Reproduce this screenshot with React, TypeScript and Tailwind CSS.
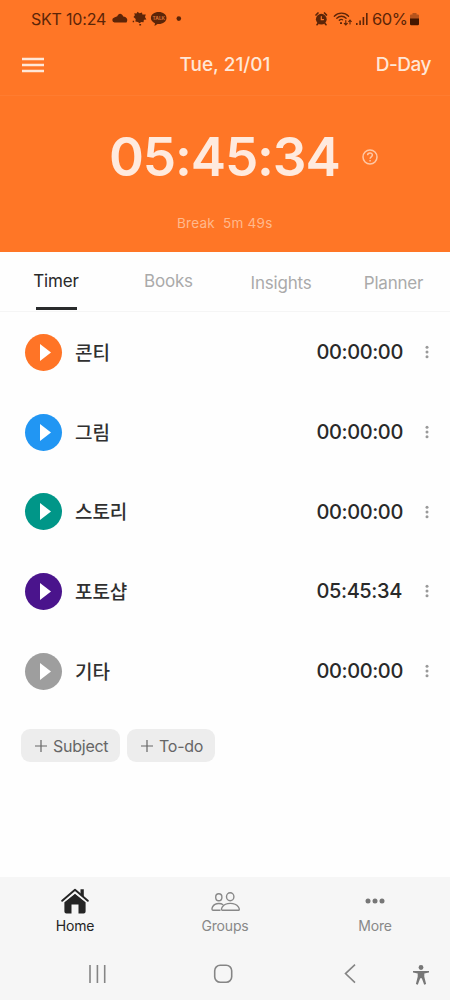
import type { ReactNode } from "react";

type Subject = {
  name: string;
  time: string;
  color: string;
};

const subjects: Subject[] = [
  { name: "콘티", time: "00:00:00", color: "bg-[#ff7426]" },
  { name: "그림", time: "00:00:00", color: "bg-[#2196f3]" },
  { name: "스토리", time: "00:00:00", color: "bg-[#009688]" },
  { name: "포토샵", time: "05:45:34", color: "bg-[#4a148c]" },
  { name: "기타", time: "00:00:00", color: "bg-[#9e9e9e]" },
];

function StatusBar() {
  return (
    <div className="flex h-[38px] items-center pl-[31px] pr-[31px] text-[#5c2508]">
      <span className="w-[75px] whitespace-nowrap text-[16px] leading-5 tracking-[-0.2px]">SKT 10:24</span>
      <svg className="ml-[6px] h-5 w-[70px]" viewBox="112 9 70 20" fill="currentColor">
        <path d="M114.5 22.5a2.6 2.6 0 0 1-.2-5.1l3-1.2c1-3.2 4.6-3.5 5.9.4 4 .4 5 3.5 3.3 5.9z" />
        <path d="m137.5 11.8 2 1.4 2.5-.7.4 2 3.4-.1-.8 2.6 1.4 2.6-2.5.2-.4 2.5-2.5-.2-1.2 1.2-2-1.4-2.4-.3.3-2.5-2.2-2.2 1.4-1.7-.7-2 2.3.4zm-4.8 9h1.4v1.4h-1.4zm6.6 3.3h1.8v1.5h-1.8z" />
        <path d="M158.7 12.1c4.4 0 7.8 2.6 7.8 5.9 0 3.4-3.4 6-7.8 6l-1.2-.1-3 2 .5-2.7c-2.5-1-4.1-2.9-4.1-5.2 0-3.3 3.4-5.9 7.8-5.9z" />
        <text x="158.8" y="20" textAnchor="middle" fontSize="4.8" fontWeight="700" fill="#dc7335">TALK</text>
        <circle cx="178.8" cy="18.6" r="2.3" />
      </svg>
      <svg className="ml-auto h-5 w-[57px]" viewBox="312 9 57 20">
        <circle cx="320.3" cy="19.2" r="5.4" fill="currentColor" />
        <g fill="none" stroke="currentColor" strokeLinecap="round">
          <path d="m315 15 2-2m8.5 2-2-2m-6.5 10.5-1 1.2m8-1.2 1 1.2" strokeWidth="1.7" />
          <path d="M320.3 16.6v3h2.2" stroke="#ff7626" strokeWidth="1.2" />
          <path d="M333.3 16.2c4-4.1 10.4-4.1 14.3 0m-11.8 2c2.7-2.6 6.6-2.6 9.3 0m-6.8 2.1c1.2-1.1 2.3-1.1 3.3-.5" strokeWidth="1.3" />
          <path d="M344.8 20.5v4.2m-1.5-1.4 1.5 1.6 1.5-1.6M349 24v-3.8m-1.3 1.3 1.3-1.4 1.3 1.4" strokeWidth="1.1" />
        </g>
        <path d="M339 22.2h2v1.8h-2zM355 23h1.6v2H355zM358.3 20.5h1.6V25h-1.6zM361.6 17h1.6v8h-1.6zM365 13h1.6v12H365z" fill="currentColor" />
      </svg>
      <span className="ml-[2px] w-[38px] whitespace-nowrap text-[16.5px] leading-5 tracking-[-0.4px]">60%</span>
      <svg className="h-[14px] w-[9px]" viewBox="0 0 9 14">
        <path d="M2.5 1h4v1.5H8A1 1 0 0 1 9 3.5V7H0V3.5a1 1 0 0 1 1-1h1.5z" fill="#b6531c" />
        <path d="M0 6.5h9V12a1.2 1.2 0 0 1-1.2 1.2H1.2A1.2 1.2 0 0 1 0 12z" fill="#451700" />
      </svg>
    </div>
  );
}

function Header() {
  return (
    <header className="h-[252px] shrink-0 bg-[#ff7626]">
      <StatusBar />
      <div className="grid h-[58px] grid-cols-3 items-center border-b border-[#ff7c30] pb-1 pl-[22px] pr-[19px] text-[19px] font-medium text-[#ffe7d7]">
        <svg className="h-4 w-[22px]" viewBox="0 0 22 16" stroke="currentColor" strokeWidth="2.5">
          <path d="M0 2h22M0 8h22M0 14h22" />
        </svg>
        <span className="-ml-[3px] pt-[2px] text-center whitespace-nowrap">Tue, 21/01</span>
        <span className="pt-[2px] text-right tracking-[-0.5px]">D-Day</span>
      </div>
      <div className="flex h-[122px] items-center pl-[109px]">
        <span className="w-[232px] whitespace-nowrap pt-px text-[53px] leading-none font-semibold tracking-[-1.15px] text-[#ffeade]">05:45:34</span>
        <svg className="ml-[21px] h-4 w-4" viewBox="0 0 16 16" fill="none" stroke="#ffc7a4" strokeWidth="1.5">
          <circle cx="8" cy="8" r="7" />
          <path d="M5.6 6.3c0-3.2 4.8-3 4.8-.2 0 1.8-2.3 1.8-2.3 3.6M8.1 11v1.5" />
        </svg>
      </div>
      <p className="-mt-[5px] pl-[177px] text-[13.5px] leading-5 tracking-[0.25px] whitespace-pre text-[#ffb98d]">Break  5m 49s</p>
    </header>
  );
}

function Tabs() {
  return (
    <nav className="flex h-[60px] shrink-0 border-b border-[#f5f5f5] text-[17px] leading-6 tracking-[-0.2px] text-[#aaa]">
      <div className="flex w-[112px] flex-col items-center justify-between pt-[17px] text-[#292929]">
        <span>Timer</span>
        <span className="mb-px h-[3px] w-[41px] bg-[#292b2c]" />
      </div>
      <span className="w-[113px] pt-[17px] text-center">Books</span>
      <span className="w-[112px] pt-[19px] text-center">Insights</span>
      <span className="w-[113px] pt-[19px] text-center">Planner</span>
    </nav>
  );
}

function SubjectRow({ name, time, color }: Subject) {
  return (
    <div className="flex h-[79.7px] items-center pl-[25px] pr-[21.5px]">
      <span className={`flex size-[37px] items-center justify-center rounded-full ${color}`}>
        <svg className="ml-[3px] h-[17px] w-[11px]" viewBox="0 0 11 17" fill="white">
          <path d="M0 0v17l11-8.5z" />
        </svg>
      </span>
      <span className="ml-[13px] font-['Noto_Sans_CJK_KR',sans-serif] text-[19px] font-medium tracking-[-0.1px] text-[#303030]">{name}</span>
      <span className="ml-auto w-[86px] whitespace-nowrap text-[20px] font-medium tracking-[-0.4px] text-[#292929]">{time}</span>
      <svg className="ml-[22px] h-[14px] w-[4px]" viewBox="0 0 4 14" fill="#999">
        <circle cx="2" cy="2.3" r="1.5" />
        <circle cx="2" cy="7" r="1.5" />
        <circle cx="2" cy="11.7" r="1.5" />
      </svg>
    </div>
  );
}

function AddButton({ label, width }: { label: string; width: string }) {
  return (
    <button className={`flex h-[33px] items-center rounded-[9px] bg-[#ededed] pl-[14px] text-[16px] tracking-[-0.25px] text-[#666] ${width}`}>
      <svg className="mr-[6px] h-3 w-3 shrink-0" viewBox="0 0 12 12" stroke="currentColor" strokeWidth="1.2">
        <path d="M6 0v12M0 6h12" />
      </svg>
      <span className="whitespace-nowrap">{label}</span>
    </button>
  );
}

function NavItem({ label, active, children }: { label: string; active?: boolean; children: ReactNode }) {
  return (
    <div className={`flex flex-1 flex-col items-center text-[14px] leading-5 tracking-[-0.15px] ${active ? "text-[#252525]" : "text-[#888]"}`}>
      <div className="flex h-[27px] items-center">{children}</div>
      <span className="mt-px">{label}</span>
    </div>
  );
}

function BottomNav() {
  return (
    <footer className="mt-auto h-[123px] shrink-0 bg-[#f6f6f6]">
      <div className="flex h-[70px] pt-[11px]">
        <NavItem label="Home" active>
          <svg className="h-[27px] w-[28px]" viewBox="0 0 28 27" fill="currentColor">
            <path d="M19.5 1.2h3.3v8.5l-3.3-2.8z" />
            <path d="M3.4 14.3 14 5.7l10.6 8.6v9.2a2 2 0 0 1-2 2h-5.1v-9h-7v9H5.4a2 2 0 0 1-2-2z" />
            <path d="M2 14.4 14 4.6l12 9.8" fill="none" stroke="#f6f6f6" strokeWidth="1.2" />
            <path d="m1.2 12.8 12.8-11 12.8 11" fill="none" stroke="currentColor" strokeWidth="1.9" strokeLinecap="round" strokeLinejoin="round" />
          </svg>
        </NavItem>
        <NavItem label="Groups">
          <svg className="mt-px h-[20px] w-[29px]" viewBox="0 0 29 20" fill="none" stroke="currentColor" strokeWidth="1.4" strokeLinejoin="round">
            <ellipse cx="7.8" cy="5.2" rx="3.1" ry="3.5" />
            <ellipse cx="19.2" cy="4.7" rx="3.7" ry="4" />
            <path d="M9.5 18.3H2c-2.3 0-.8-6.8 5.8-6.8 2 0 3.3.5 4.3 1.2M11.4 18.3c-2.3 0-.4-6.9 7.9-6.9s10.4 6.9 8.1 6.9z" />
          </svg>
        </NavItem>
        <NavItem label="More">
          <svg className="mb-[2px] h-[6px] w-[20px]" viewBox="0 0 20 6" fill="#777">
            <circle cx="3" cy="3" r="2.5" />
            <circle cx="10" cy="3" r="2.5" />
            <circle cx="17" cy="3" r="2.5" />
          </svg>
        </NavItem>
      </div>
      <div className="flex h-[53px] items-center pl-[88px] pr-[20px] text-[#858585]">
        <svg className="h-[18px] w-[18px]" viewBox="0 0 18 18" stroke="currentColor" strokeWidth="1.6">
          <path d="M2 0v18M9.4 0v18M16.7 0v18" />
        </svg>
        <svg className="ml-[107px] h-5 w-5" viewBox="0 0 20 20" fill="none" stroke="currentColor" strokeWidth="1.6">
          <rect x="1.7" y="1.2" width="17" height="17" rx="5.5" />
        </svg>
        <svg className="ml-[111px] h-5 w-3" viewBox="0 0 12 20" fill="none" stroke="currentColor" strokeWidth="1.6">
          <path d="m11 .6-9.5 9 9.5 9" />
        </svg>
        <svg className="ml-auto mt-[3px] h-[20px] w-[18px]" viewBox="0 0 18 20" fill="#777">
          <circle cx="9" cy="2.5" r="2.4" />
          <path d="M1 6.1h16v1.5l-4.7 1v3.2l1.8 7.3-1.9.6-2.4-6.4H8.2l-2.4 6.4-1.9-.6 1.8-7.3V8.6L1 7.6z" />
        </svg>
      </div>
    </footer>
  );
}

export default function App() {
  return (
    <div className="flex h-[1000px] w-[450px] flex-col overflow-hidden bg-[#fefefe] font-[Inter,'Noto_Sans_CJK_KR',sans-serif]">
      <Header />
      <Tabs />
      <main className="pt-[0.5px]">
        {subjects.map((subject) => (
          <SubjectRow key={subject.name} {...subject} />
        ))}
        <div className="mt-[18.5px] flex gap-[7px] pl-[21px]">
          <AddButton label="Subject" width="w-[99px]" />
          <AddButton label="To-do" width="w-[88px]" />
        </div>
      </main>
      <BottomNav />
    </div>
  );
}
